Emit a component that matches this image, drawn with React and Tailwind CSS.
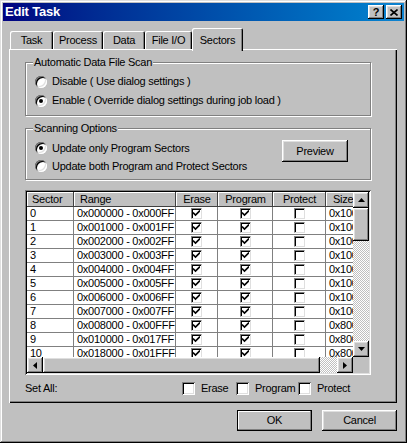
const RAISED =
  "shadow-[inset_-1px_-1px_#000,inset_1px_1px_#fff,inset_-2px_-2px_#808080,inset_2px_2px_#dfdfdf]";
const SUNKEN =
  "shadow-[inset_1px_1px_#808080,inset_-1px_-1px_#fff,inset_2px_2px_#000,inset_-2px_-2px_#dfdfdf]";
const ETCHED = "border border-[#808080] shadow-[inset_1px_1px_#fff,1px_1px_#fff]";
const TRACK =
  "bg-[repeating-conic-gradient(#c0c0c0_0_25%,#fff_0_50%)] bg-[length:2px_2px]";

const TABS = [
  { label: "Task", w: "w-[43px]" },
  { label: "Process", w: "w-[50px]" },
  { label: "Data", w: "w-[42px]" },
  { label: "File I/O", w: "w-[47px]" },
];

const ROWS = [
  ["0", "0x000000 - 0x000FF", "0x1000"],
  ["1", "0x001000 - 0x001FF", "0x1000"],
  ["2", "0x002000 - 0x002FF", "0x1000"],
  ["3", "0x003000 - 0x003FF", "0x1000"],
  ["4", "0x004000 - 0x004FF", "0x1000"],
  ["5", "0x005000 - 0x005FF", "0x1000"],
  ["6", "0x006000 - 0x006FF", "0x1000"],
  ["7", "0x007000 - 0x007FF", "0x1000"],
  ["8", "0x008000 - 0x00FFF", "0x8000"],
  ["9", "0x010000 - 0x017FF", "0x8000"],
  ["10", "0x018000 - 0x01FFF", "0x8000"],
];

function Radio({ checked }) {
  return (
    <span className="flex h-[12px] w-[12px] shrink-0 items-center justify-center rounded-full bg-white shadow-[inset_1px_1px_#808080,inset_-1px_-1px_#fff,inset_2px_2px_#000,inset_-2px_-2px_#dfdfdf]">
      {checked && <span className="h-[4px] w-[4px] rounded-full bg-black" />}
    </span>
  );
}

function Check() {
  return (
    <svg width="7" height="7" viewBox="0 0 7 7" className="block">
      <path d="M0 2.5 L2.5 5 L7 0.5" fill="none" stroke="#000" strokeWidth="1.6" />
    </svg>
  );
}

function CellBox({ checked }) {
  return (
    <span className="flex h-[11px] w-[11px] items-center justify-center border border-t-[#808080] border-l-[#808080] border-b-[#dfdfdf] border-r-[#dfdfdf] bg-white shadow-[inset_1px_1px_#000]">
      {checked && <Check />}
    </span>
  );
}

function Arrow({ dir }) {
  const pts = {
    up: "0,4 3.5,0 7,4",
    down: "0,0 3.5,4 7,0",
    left: "4,0 0,3.5 4,7",
    right: "0,0 4,3.5 0,7",
  }[dir];
  const vertical = dir === "up" || dir === "down";
  return (
    <span className={`flex h-[16px] w-[16px] shrink-0 items-center justify-center bg-[#c0c0c0] ${RAISED}`}>
      <svg width={vertical ? 7 : 4} height={vertical ? 4 : 7} viewBox={vertical ? "0 0 7 4" : "0 0 4 7"}>
        <polygon points={pts} fill="#000" />
      </svg>
    </span>
  );
}

function Button({ children, isDefault, className = "" }) {
  return (
    <button
      className={`flex items-center justify-center bg-[#c0c0c0] text-black ${
        isDefault
          ? "border border-black shadow-[inset_-1px_-1px_#808080,inset_1px_1px_#fff]"
          : RAISED
      } ${className}`}
    >
      {children}
    </button>
  );
}

function SectorGrid() {
  return (
    <div className={`mt-[10px] w-[346px] bg-[#c0c0c0] p-[2px] ${SUNKEN}`}>
      <div className="flex h-[165px]">
        <div className="w-[326px] overflow-hidden bg-white">
          <div className="flex h-[15px] w-[400px] bg-[#c0c0c0]">
            {[
              ["Sector", "w-[47px] pl-[5px]"],
              ["Range", "w-[102px] pl-[6px]"],
              ["Erase", "w-[42px] justify-center"],
              ["Program", "w-[55px] justify-center"],
              ["Protect", "w-[53px] justify-center"],
              ["Size", "w-[60px] pl-[7px]"],
            ].map(([h, c]) => (
              <div
                key={h}
                className={`flex h-full shrink-0 items-center whitespace-nowrap shadow-[inset_-1px_-1px_#404040,inset_1px_1px_#fff] ${c}`}
              >
                {h}
              </div>
            ))}
          </div>
          {ROWS.map(([n, range, size]) => (
            <div key={n} className="flex h-[14px] w-[400px] whitespace-nowrap text-black">
              <div className="flex w-[47px] shrink-0 items-center border-r border-b border-[#808080] pl-[3px]">{n}</div>
              <div className="flex w-[102px] shrink-0 items-center overflow-hidden border-r border-b border-[#808080] pl-[3px]">{range}</div>
              <div className="flex w-[42px] shrink-0 items-center justify-center border-r border-b border-[#808080]">
                <CellBox checked />
              </div>
              <div className="flex w-[55px] shrink-0 items-center justify-center border-r border-b border-[#808080]">
                <CellBox checked />
              </div>
              <div className="flex w-[53px] shrink-0 items-center justify-center border-r border-b border-[#808080]">
                <CellBox />
              </div>
              <div className="flex w-[60px] shrink-0 items-center border-r border-b border-[#808080] pl-[3px]">{size}</div>
            </div>
          ))}
        </div>
        {/* vertical scrollbar */}
        <div className={`flex w-[16px] flex-col ${TRACK}`}>
          <Arrow dir="up" />
          <div className={`h-[33px] bg-[#c0c0c0] ${RAISED}`} />
          <div className="flex-1" />
          <Arrow dir="down" />
        </div>
      </div>
      {/* horizontal scrollbar */}
      <div className="flex h-[16px]">
        <div className={`flex w-[326px] ${TRACK}`}>
          <Arrow dir="left" />
          <div className={`w-[277px] bg-[#c0c0c0] ${RAISED}`} />
          <div className="flex-1" />
          <Arrow dir="right" />
        </div>
        <div className="w-[16px] bg-[#c0c0c0]" />
      </div>
    </div>
  );
}

function BigBox({ label, w }) {
  return (
    <>
      <span className="h-[13px] w-[13px] shrink-0 bg-white shadow-[inset_1px_1px_#808080,inset_-1px_-1px_#fff,inset_2px_2px_#000,inset_-2px_-2px_#dfdfdf]" />
      <span className={`ml-[6px] shrink-0 whitespace-nowrap ${w}`}>{label}</span>
    </>
  );
}

export default function App() {
  return (
    <div className="h-[443px] w-[407px] bg-[#c0c0c0] p-[3px] font-['Liberation_Sans',Arial,sans-serif] text-[11px] tracking-[-0.25px] text-black shadow-[inset_-1px_-1px_#000,inset_1px_1px_#dfdfdf,inset_-2px_-2px_#808080,inset_2px_2px_#fff]">
      {/* title bar */}
      <div className="flex h-[18px] items-center bg-linear-to-r from-[#000080] to-[#1084d0] pr-[2px] pl-[2px]">
        <span className="text-[13px] font-bold tracking-[-0.2px] text-white">Edit Task</span>
        <div className="ml-auto flex gap-[2px]">
          <span className={`flex h-[14px] w-[16px] items-center justify-center bg-[#c0c0c0] text-[11px] leading-none font-bold ${RAISED}`}>
            ?
          </span>
          <span className={`flex h-[14px] w-[16px] items-center justify-center bg-[#c0c0c0] ${RAISED}`}>
            <svg width="8" height="7" viewBox="0 0 8 7">
              <path d="M0.5 0.5 L7.5 6.5 M7.5 0.5 L0.5 6.5" stroke="#000" strokeWidth="1.6" />
            </svg>
          </span>
        </div>
      </div>

      <div className="pr-[7px] pl-[6px]">
        {/* tabs */}
        <div className="mt-[7px] flex h-[21px] items-end pl-[1px]">
          {TABS.map((t) => (
            <div
              key={t.label}
              className={`flex h-[18px] shrink-0 items-center justify-center rounded-t-[2px] shadow-[inset_1px_1px_#fff,inset_-1px_0_#000,inset_-2px_0_#808080] ${t.w}`}
            >
              {t.label}
            </div>
          ))}
          <div className="relative z-10 -mb-[2px] flex h-[23px] w-[51px] shrink-0 items-start justify-center rounded-t-[2px] bg-[#c0c0c0] pt-[4px] shadow-[inset_1px_1px_#fff,inset_-1px_0_#000,inset_-2px_0_#808080]">
            Sectors
          </div>
        </div>

        {/* tab panel */}
        <div className="h-[354px] w-[388px] pl-[16px] shadow-[inset_1px_1px_#fff,inset_-1px_-1px_#000,inset_-2px_-2px_#808080]">
          <div className="h-[13px]" />
          {/* group 1 */}
          <div className={`relative h-[54px] w-[346px] ${ETCHED}`}>
            <span className="absolute -top-[7px] left-[7px] bg-[#c0c0c0] px-[1px] leading-[13px]">
              Automatic Data File Scan
            </span>
            <div className="flex flex-col pt-[9px] pl-[9px]">
              <div className="flex h-[19px] items-center gap-[5px]">
                <Radio />
                <span>Disable ( Use dialog settings )</span>
              </div>
              <div className="flex h-[19px] items-center gap-[5px]">
                <Radio checked />
                <span>Enable ( Override dialog settings during job load )</span>
              </div>
            </div>
          </div>

          {/* group 2 */}
          <div className={`relative mt-[12px] flex h-[52px] w-[346px] ${ETCHED}`}>
            <span className="absolute -top-[7px] left-[7px] bg-[#c0c0c0] px-[1px] leading-[13px]">
              Scanning Options
            </span>
            <div className="flex flex-1 flex-col pt-[10px] pl-[9px]">
              <div className="flex h-[18px] items-center gap-[5px]">
                <Radio checked />
                <span>Update only Program Sectors</span>
              </div>
              <div className="flex h-[18px] items-center gap-[5px]">
                <Radio />
                <span>Update both Program and Protect Sectors</span>
              </div>
            </div>
            <Button className="mt-[11px] mr-[22px] h-[22px] w-[66px]">Preview</Button>
          </div>

          <SectorGrid />

          {/* set all */}
          <div className="mt-[7px] flex h-[13px] items-center">
            <span className="w-[157px] shrink-0">Set All:</span>
            <BigBox label="Erase" w="w-[35px]" />
            <BigBox label="Program" w="w-[43px]" />
            <BigBox label="Protect" w="w-[40px]" />
          </div>
        </div>

        {/* dialog buttons */}
        <div className="mt-[7px] flex justify-end gap-[10px]">
          <Button isDefault className="h-[21px] w-[75px]">
            OK
          </Button>
          <Button className="h-[21px] w-[75px]">Cancel</Button>
        </div>
      </div>
    </div>
  );
}
